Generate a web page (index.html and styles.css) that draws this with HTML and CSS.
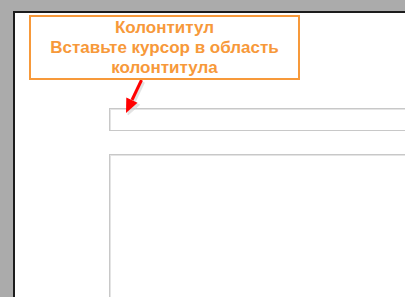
FILE: index.html
```html
<!DOCTYPE html>
<html lang="ru">
<head>
<meta charset="utf-8">
<link rel="stylesheet" href="styles.css">
</head>
<body>
<div class="page">
  <div class="callout">
    <div>Колонтитул</div>
    <div>Вставьте курсор в область</div>
    <div>колонтитула</div>
  </div>
  <div class="header-area"></div>
  <div class="body-area"></div>
  <svg class="arrow" width="40" height="40" viewBox="0 0 40 40">
    <g transform="translate(2,2)" fill="#d0d0d0" stroke="#d0d0d0" opacity="0.6">
      <line x1="26.5" y1="0" x2="17" y2="20" stroke-width="3"/>
      <polygon points="11,33 11.3,17.5 22.5,22.8"/>
    </g>
    <line x1="26.5" y1="0" x2="17" y2="20" stroke="#ff0000" stroke-width="3"/>
    <polygon points="11,33 11.3,17.5 22.5,22.8" fill="#ff0000"/>
  </svg>
</div>
</body>
</html>
```
FILE: styles.css
```css
html, body {
  margin: 0;
  padding: 0;
}
body {
  background: #ababab;
  overflow: hidden;
  width: 405px;
  height: 297px;
}
.page {
  position: relative;
  margin: 11px 0 0 13px;
  width: 392px;
  height: 286px;
  overflow: hidden;
  background: #ffffff;
  border-left: 2px solid #1c1c1c;
  border-top: 2px solid #1c1c1c;
  padding-top: 2px;
  box-sizing: border-box;
}
.callout {
  margin-left: 14px;
  width: 271px;
  height: 65px;
  box-sizing: border-box;
  border: 2px solid #f7993a;
  color: #f7993a;
  font-family: "Liberation Sans", Arial, sans-serif;
  font-weight: bold;
  font-size: 17px;
  line-height: 20px;
  text-align: center;
  padding-top: 1px;
}
.header-area {
  margin: 28px 0 0 94px;
  height: 21px;
  border: 1px solid #c8c8c8;
  border-right: none;
  box-shadow: inset 1px 1px 0 #e4e4e4;
}
.body-area {
  margin: 23px 0 0 94px;
  height: 200px;
  border: 1px solid #c8c8c8;
  border-right: none;
  box-shadow: inset 1px 1px 0 #e4e4e4;
}
.arrow {
  position: absolute;
  left: 100px;
  top: 67px;
}
```
